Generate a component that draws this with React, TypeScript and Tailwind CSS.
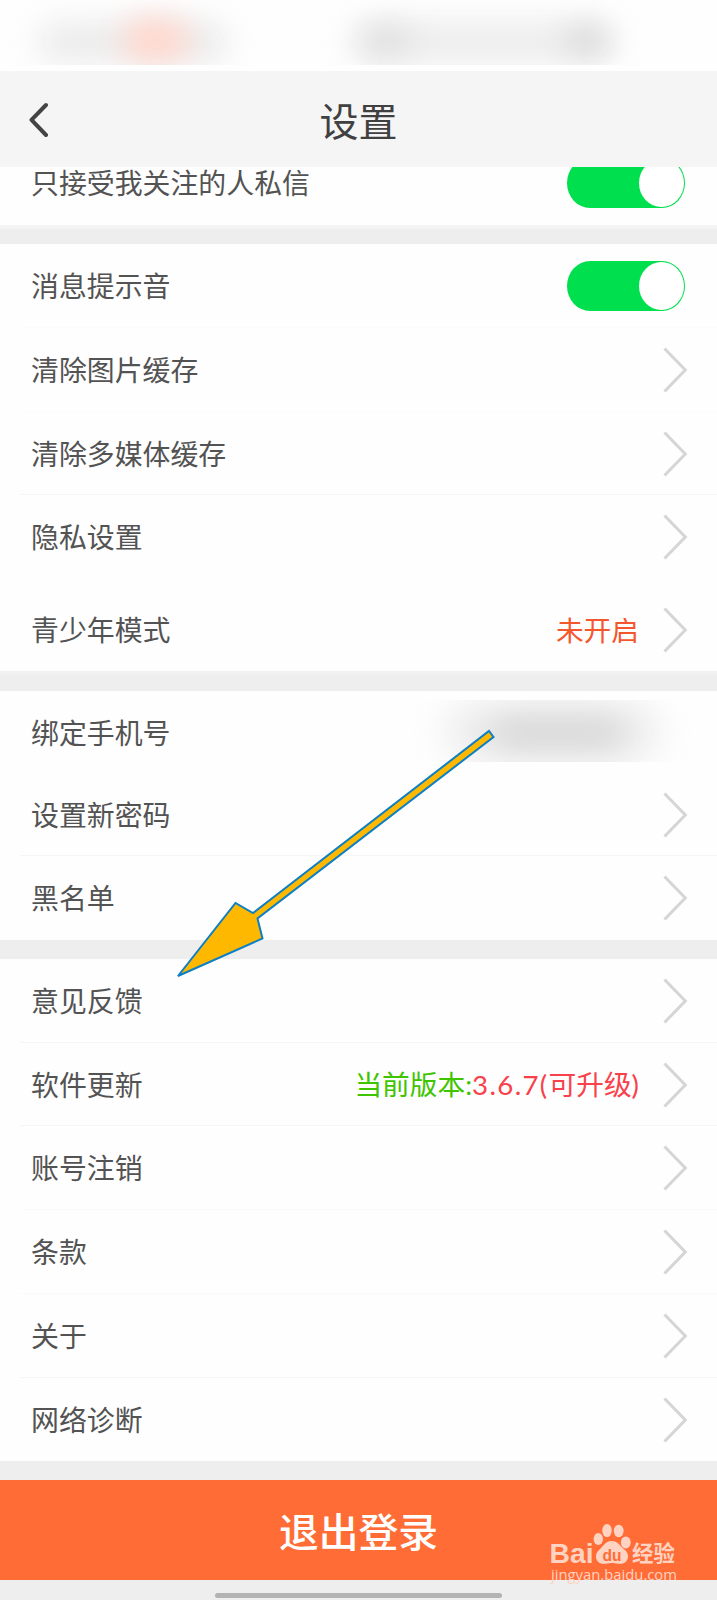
import type { ReactNode } from "react";
import clsx from "clsx";

interface RowProps {
  label: string;
  height?: string;
  divider?: string;
  arrow?: boolean;
  children?: ReactNode;
}

function ChevronRight() {
  return (
    <svg className="h-[46px] w-[25px] shrink-0" viewBox="0 0 25 46" fill="none">
      <path d="M1.5 1.5 L22.3 23 L1.5 44.5" stroke="#d5d5d5" strokeWidth="3" />
    </svg>
  );
}

function Toggle() {
  return (
    <div className="flex h-[50px] w-[118px] shrink-0 justify-end rounded-[23px/25px] bg-[#00e04e] p-px">
      <div className="h-12 w-[45px] rounded-[50%] bg-white" />
    </div>
  );
}

function Row({ label, height = "h-[84px]", divider, arrow = true, children }: RowProps) {
  return (
    <>
      <div className={clsx("flex items-center justify-between pl-[31px]", arrow ? "pr-[29px]" : "pr-8", height)}>
        <span className="text-[27.9px] leading-none text-[#535353]">{label}</span>
        <div className="flex items-center gap-6">
          {children}
          {arrow && <ChevronRight />}
        </div>
      </div>
      {divider && <div className={clsx("-mt-px ml-5 h-px", divider)} />}
    </>
  );
}

function Section({ children }: { children: ReactNode }) {
  return <section className="bg-[#fefefe]">{children}</section>;
}

function StatusBar() {
  return (
    <div className="relative h-[71px] overflow-hidden bg-[#fefefe]">
      <div className="absolute top-0 left-0 h-[65px] w-full overflow-hidden">
        <div className="absolute top-[22px] left-[38px] h-[40px] w-[190px] rounded-full bg-[#ebebeb] blur-[15px]" />
        <div className="absolute top-[18px] left-[122px] h-[44px] w-[68px] rounded-full bg-[#ffd9cf] blur-[14px]" />
        <div className="absolute top-[22px] left-[350px] h-[40px] w-[265px] rounded-full bg-[#ececec] blur-[15px]" />
        <div className="absolute top-[26px] left-[365px] h-[30px] w-[45px] rounded-full bg-[#e0e0e0] blur-[14px]" />
        <div className="absolute top-[26px] left-[565px] h-[30px] w-[42px] rounded-full bg-[#dcdcdc] blur-[14px]" />
      </div>
    </div>
  );
}

function PointerArrow() {
  return (
    <svg className="pointer-events-none absolute top-[725px] left-[170px] h-[260px] w-[330px]" viewBox="170 725 330 260">
      <path
        d="M178 976 L235.5 903 L253 913 L489 731 L493.5 737 L257.5 918.5 L262.5 938.5 Z"
        fill="#ffb800"
        stroke="#0d7fc4"
        strokeWidth="2"
      />
    </svg>
  );
}

function Watermark() {
  return (
    <svg
      className="pointer-events-none absolute top-[1520px] left-[545px] h-[66px] w-[140px] font-['Open_Sans','Noto_Sans_CJK_SC',sans-serif]"
      viewBox="545 1520 140 66"
      fill="#ffd3c2"
    >
      <text className="font-['Liberation_Sans',sans-serif]" x="549.5" y="1563" fontSize="28.5" fontWeight="700" textLength="44" lengthAdjust="spacingAndGlyphs">Bai</text>
      <ellipse cx="598.3" cy="1539" rx="4.7" ry="6" />
      <ellipse cx="607" cy="1530.5" rx="4.7" ry="6.6" />
      <ellipse cx="618.7" cy="1531" rx="4.9" ry="6.2" />
      <ellipse cx="625.8" cy="1542.5" rx="4.9" ry="6" />
      <path d="M611.5 1541 C605 1541 603 1547 599 1550 C594 1554 595 1563 603 1564 C607 1564 608 1563 612 1563 C616 1563 617 1564 621 1564 C629 1563 630 1554 625 1550 C620 1546 618 1541 611.5 1541 Z" />
      <text className="font-['Liberation_Sans',sans-serif]" x="602.5" y="1561" fontSize="17" fontWeight="700" fill="#ff6c36" textLength="19" lengthAdjust="spacingAndGlyphs">du</text>
      <text x="632" y="1561" fontSize="22" fontWeight="700" textLength="43" lengthAdjust="spacingAndGlyphs">经验</text>
      <text x="551" y="1580" fontSize="14.5" textLength="126" lengthAdjust="spacingAndGlyphs">jingyan.baidu.com</text>
    </svg>
  );
}

export default function App() {
  return (
    <div className="relative flex h-[1600px] w-[717px] flex-col overflow-hidden bg-[#eeeeee] font-['Noto_Sans_CJK_SC',sans-serif]">
      <StatusBar />
      <header className="grid h-24 shrink-0 grid-cols-3 items-center bg-[#f5f5f5]">
        <svg className="ml-7 h-9 w-6" viewBox="0 0 24 36" fill="none">
          <path d="M18 4 L3.5 18.8 L18 34" stroke="#444444" strokeWidth="4" strokeLinecap="round" strokeLinejoin="round" />
        </svg>
        <h1 className="text-center text-[39px] leading-none text-[#404040]">设置</h1>
      </header>

      <main>
        {/* first row is scrolled partly under the header */}
        <div className="flex h-[58px] flex-col justify-end overflow-hidden">
          <Section>
            <Row label="只接受我关注的人私信" arrow={false}>
              <Toggle />
            </Row>
          </Section>
        </div>
        <div className="h-1 bg-[#f4f4f4]" />
        <div className="h-[15px]" />

        <Section>
          <Row label="消息提示音" arrow={false} divider="bg-[#fbfbfb]">
            <Toggle />
          </Row>
          <Row label="清除图片缓存" divider="bg-[#fbfbfb]" />
          <Row label="清除多媒体缓存" height="h-[83px]" divider="bg-[#f5f5f5]" />
          <Row label="隐私设置" />
          <div className="h-[9px]" />
          <Row label="青少年模式" height="h-[83px]">
            <span className="text-[27.7px] leading-none text-[#f4562e]">未开启</span>
          </Row>
        </Section>
        <div className="h-1 bg-[#f1f1f1]" />
        <div className="h-4" />

        <Section>
          <Row label="绑定手机号" arrow={false} height="h-[83px]">
            <div className="relative -mt-1 -mr-8 h-[62px] w-[310px] overflow-hidden">
              <div className="absolute top-1 left-[40px] h-[56px] w-[210px] rounded-[28px] bg-[#eaeaea] blur-[18px]" />
              <div className="absolute top-4 left-[85px] h-[34px] w-[130px] rounded-full bg-[#dadada] blur-[14px]" />
            </div>
          </Row>
          <Row label="设置新密码" height="h-[82px]" divider="bg-[#f5f5f5]" />
          <Row label="黑名单" />
        </Section>
        <div className="h-[19px]" />

        <Section>
          <Row label="意见反馈" divider="bg-[#f5f5f5]" />
          <Row label="软件更新" height="h-[83px]" divider="bg-[#f5f5f5]">
            <span className="flex items-center font-[Lato,'Noto_Sans_CJK_SC',sans-serif] text-[27.7px] leading-none whitespace-nowrap text-[#3fc400]">
              当前版本:
              <span className="text-[#f9414b]">
                <span className="tracking-[1.3px]">3.6.7(</span>
                可升级)
              </span>
            </span>
          </Row>
          <Row label="账号注销" divider="bg-[#fafafa]" />
          <Row label="条款" divider="bg-[#fafafa]" />
          <Row label="关于" divider="bg-[#f5f5f5]" />
          <Row label="网络诊断" height="h-[83px]" />
        </Section>
      </main>

      <footer className="mt-auto">
        <button className="flex h-[100px] w-full items-center justify-center bg-[#ff6c36] text-[39.8px] leading-none font-medium text-white">
          退出登录
        </button>
        <div className="flex h-5 items-end justify-center pb-0.5">
          <div className="h-[5px] w-[287px] rounded-full bg-[#b3b3b3]" />
        </div>
      </footer>

      <PointerArrow />
      <Watermark />
    </div>
  );
}
